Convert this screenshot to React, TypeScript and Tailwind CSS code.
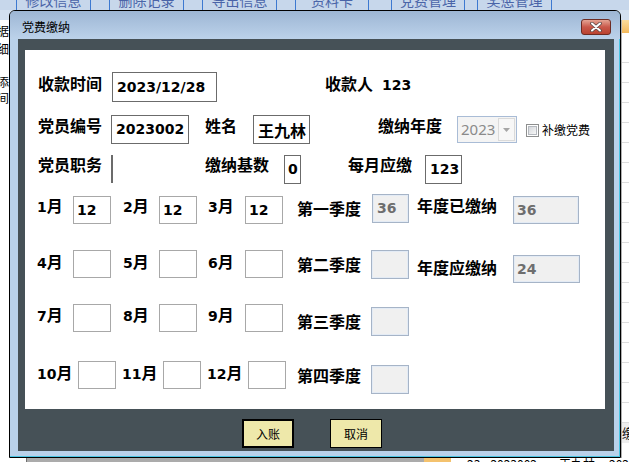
import type { ReactNode } from 'react';

const LABEL = 'whitespace-nowrap text-[16px] leading-[16px] font-bold text-black';
const NUM = "font-['DejaVu_Sans',sans-serif] text-[14px] font-bold";

type Kind = 'dark' | 'light' | 'off';

function Box({ className, kind, children }: { className: string; kind: Kind; children?: ReactNode }) {
  const look =
    kind === 'dark'
      ? 'border-[#6b6b6b] bg-white text-black pl-[4px]'
      : kind === 'light'
        ? 'border-[#a8a8a8] bg-white text-black pl-[3px]'
        : 'border-[#a6b4c7] bg-[#f0f0f0] text-[#6e6e6e] pl-[3px] shadow-[inset_0_0_0_1px_#e3ebf5]';
  return <div className={`flex shrink-0 items-center border ${look} ${className}`}>{children}</div>;
}

function Month({ n, className }: { n: string; className: string }) {
  return (
    <span className={`${LABEL} ${className}`}>
      <span className={NUM}>{n}</span>月
    </span>
  );
}

function Num({ children }: { children: ReactNode }) {
  return <span className={NUM}>{children}</span>;
}

function CloseButton() {
  return (
    <div className="flex h-[16px] w-[30px] items-center justify-center rounded-[3px] border border-[#6e2b22] bg-linear-to-b from-[#e4a494] via-[#c9584a] to-[#b9422f]">
      <svg width="12" height="10" viewBox="0 0 12 10">
        <path d="M2 1.5 L10 8.5 M10 1.5 L2 8.5" stroke="#5a4a48" strokeWidth="3.6" strokeLinecap="round" />
        <path d="M2 1.5 L10 8.5 M10 1.5 L2 8.5" stroke="#ffffff" strokeWidth="2" strokeLinecap="round" />
      </svg>
    </div>
  );
}

function Tabs() {
  return (
    <div className="flex h-[10px] overflow-hidden bg-[#c7d7eb] text-[14px] leading-[14px] text-[#4a64a8]">
      <div className="ml-[16px] w-[75px] shrink-0 border-x border-[#3d79d0] text-center -mt-[7px]">修改信息</div>
      <div className="ml-[18px] w-[75px] shrink-0 border-x border-[#3d79d0] text-center -mt-[7px]">删除记录</div>
      <div className="ml-[18px] w-[75px] shrink-0 border-x border-[#3d79d0] text-center -mt-[7px]">导出信息</div>
      <div className="ml-[18px] w-[74px] shrink-0 border-x border-[#3d79d0] text-center -mt-[7px]">资料卡</div>
      <div className="ml-[22px] w-[74px] shrink-0 border-x border-[#3d79d0] text-center -mt-[7px]">党费管理</div>
      <div className="ml-[12px] w-[75px] shrink-0 border-x border-[#3d79d0] text-center -mt-[7px]">奖惩管理</div>
    </div>
  );
}

function Background() {
  return (
    <div className="flex h-full flex-col">
      <Tabs />
      <div className="h-[10px] bg-[#d3e0ef]" />
      <div className="flex flex-1">
        {/* left list, mostly hidden */}
        <div className="flex w-[9px] flex-col items-end overflow-hidden text-[12px] leading-[12px] text-black">
          <span className="mt-[5px] whitespace-nowrap">数据</span>
          <span className="mt-[6px] whitespace-nowrap">明细</span>
          <span className="mt-[21px] whitespace-nowrap">添</span>
          <span className="mt-[4px] whitespace-nowrap">时间</span>
        </div>
        <div className="flex-1" />
        {/* right table, mostly hidden */}
        <div className="flex w-[8px] flex-col border-l border-[#b0b0b0]">
          <div className="h-[13px] bg-linear-to-b from-[#fbdc9c] to-[#f3b95a]" />
          <div className="h-[30px] border-b border-[#dcdcdc]" />
          {Array.from({ length: 18 }).map((_, i) => (
            <div key={i} className="h-[20px] border-b border-[#dcdcdc]" />
          ))}
          <div className="h-[20px] overflow-hidden bg-[#eeeeee] text-[13px] leading-[20px]">缴</div>
        </div>
      </div>
      <div className="flex h-[4px] overflow-hidden text-[12px] leading-[12px]">
        <div className="w-[27px]" />
        <div className="w-[407px] border-l border-[#707070] bg-[#ababab]" />
        <div className="w-[28px] bg-[#f4c26e]" />
        <div className="flex gap-[10px] pl-[16px] whitespace-nowrap text-black">
          <span>23</span>
          <span>2023002</span>
          <span className="ml-[12px]">王九林</span>
          <span className="ml-[4px]">202</span>
        </div>
      </div>
    </div>
  );
}

function Panel() {
  return (
    <div className="flex h-[359px] flex-col bg-white">
      {/* 收款时间 */}
      <div className="mt-[22px] flex h-[30px] items-start pl-[13px]">
        <span className={`${LABEL} mt-[3px] w-[74px]`}>收款时间</span>
        <Box kind="dark" className="h-[30px] w-[105px]">
          <Num>2023/12/28</Num>
        </Box>
        <span className={`${LABEL} ml-[108px] mt-[3px]`}>
          收款人<span className={`${NUM} ml-[9px]`}>123</span>
        </span>
      </div>

      {/* 党员编号 */}
      <div className="mt-[13px] flex h-[29px] items-start pl-[13px]">
        <span className={`${LABEL} mt-[2px] w-[73px]`}>党员编号</span>
        <Box kind="dark" className="h-[29px] w-[78px]">
          <Num>2023002</Num>
        </Box>
        <span className={`${LABEL} ml-[16px] mt-[2px] w-[32px]`}>姓名</span>
        <Box kind="dark" className="ml-[16px] h-[29px] w-[57px]">
          <span className={LABEL}>王九林</span>
        </Box>
        <span className={`${LABEL} ml-[68px] mt-[2px] w-[64px]`}>缴纳年度</span>
        <div className="ml-[15px] mt-[1px] flex h-[27px] w-[60px] shrink-0 border border-[#a9bcd6] bg-[#f4f4f4]">
          <span className="flex flex-1 items-center pl-[3px] font-['Noto_Sans',sans-serif] text-[15px] text-[#8a8a8a]">
            2023
          </span>
          <span className="my-[1px] mr-[1px] flex w-[17px] items-center justify-center border border-[#dadada] bg-[#f7f7f7]">
            <svg width="7" height="4" viewBox="0 0 7 4">
              <path d="M0 0 H7 L3.5 4 Z" fill="#a5a5a5" />
            </svg>
          </span>
        </div>
        <div className="ml-[9px] mt-[9px] flex h-[13px] w-[13px] shrink-0 items-center justify-center border border-[#8e8f8f] bg-white">
          <div className="h-[9px] w-[9px] border border-[#b5b9bf] bg-linear-to-br from-[#d5d8dc] to-[#f7f7f7]" />
        </div>
        <span className="ml-[3px] mt-[8px] whitespace-nowrap text-[12px] leading-[14px] text-black">补缴党费</span>
      </div>

      {/* 党员职务 */}
      <div className="mt-[11px] flex h-[29px] items-start pl-[13px]">
        <span className={`${LABEL} mt-[1px] w-[73px]`}>党员职务</span>
        <div className="h-[28px] w-[2px] shrink-0 bg-[#6b6b6b]" />
        <span className={`${LABEL} ml-[92px] mt-[1px] w-[64px]`}>缴纳基数</span>
        <Box kind="dark" className="ml-[15px] h-[29px] w-[17px] !pl-[3px]">
          <Num>0</Num>
        </Box>
        <span className={`${LABEL} ml-[47px] mt-[1px] w-[64px]`}>每月应缴</span>
        <Box kind="dark" className="ml-[13px] h-[29px] w-[37px]">
          <Num>123</Num>
        </Box>
      </div>

      {/* 1-3月 */}
      <div className="mt-[10px] flex h-[30px] items-start pl-[12px]">
        <Month n="1" className="mt-[3px] w-[36px]" />
        <Box kind="light" className="mt-[2px] h-[28px] w-[38px]">
          <Num>12</Num>
        </Box>
        <Month n="2" className="ml-[12px] mt-[3px] w-[36px]" />
        <Box kind="light" className="mt-[2px] h-[28px] w-[38px]">
          <Num>12</Num>
        </Box>
        <Month n="3" className="ml-[11px] mt-[3px] w-[37px]" />
        <Box kind="light" className="mt-[2px] h-[28px] w-[38px]">
          <Num>12</Num>
        </Box>
        <span className={`${LABEL} ml-[14px] mt-[6px] w-[64px]`}>第一季度</span>
        <Box kind="off" className="ml-[11px] h-[29px] w-[37px] !pl-[4px]">
          <Num>36</Num>
        </Box>
        <span className={`${LABEL} ml-[8px] mt-[3px] w-[80px]`}>年度已缴纳</span>
        <Box kind="off" className="ml-[16px] mt-[2px] h-[28px] w-[66px]">
          <Num>36</Num>
        </Box>
      </div>

      {/* 4-6月 */}
      <div className="mt-[26px] flex h-[33px] items-start pl-[12px]">
        <Month n="4" className="mt-[3px] w-[36px]" />
        <Box kind="light" className="h-[28px] w-[38px]" />
        <Month n="5" className="ml-[12px] mt-[3px] w-[36px]" />
        <Box kind="light" className="h-[28px] w-[38px]" />
        <Month n="6" className="ml-[11px] mt-[3px] w-[37px]" />
        <Box kind="light" className="h-[28px] w-[38px]" />
        <span className={`${LABEL} ml-[14px] mt-[6px] w-[64px]`}>第二季度</span>
        <Box kind="off" className="ml-[10px] h-[29px] w-[38px]" />
        <span className={`${LABEL} ml-[8px] mt-[9px] w-[80px]`}>年度应缴纳</span>
        <Box kind="off" className="ml-[16px] mt-[5px] h-[28px] w-[67px]">
          <Num>24</Num>
        </Box>
      </div>

      {/* 7-9月 */}
      <div className="mt-[21px] flex h-[32px] items-start pl-[12px]">
        <Month n="7" className="mt-[2px] w-[36px]" />
        <Box kind="light" className="h-[28px] w-[38px]" />
        <Month n="8" className="ml-[12px] mt-[2px] w-[36px]" />
        <Box kind="light" className="h-[28px] w-[38px]" />
        <Month n="9" className="ml-[11px] mt-[2px] w-[37px]" />
        <Box kind="light" className="h-[28px] w-[38px]" />
        <span className={`${LABEL} ml-[14px] mt-[9px] w-[64px]`}>第三季度</span>
        <Box kind="off" className="ml-[10px] mt-[3px] h-[29px] w-[38px]" />
      </div>

      {/* 10-12月 */}
      <div className="mt-[25px] flex h-[32px] items-start pl-[12px]">
        <Month n="10" className="mt-[3px] w-[41px]" />
        <Box kind="light" className="h-[28px] w-[38px]" />
        <Month n="11" className="ml-[6px] mt-[3px] w-[41px]" />
        <Box kind="light" className="h-[28px] w-[38px]" />
        <Month n="12" className="ml-[6px] mt-[3px] w-[41px]" />
        <Box kind="light" className="h-[28px] w-[38px]" />
        <span className={`${LABEL} ml-[11px] mt-[6px] w-[64px]`}>第四季度</span>
        <Box kind="off" className="ml-[10px] mt-[4px] h-[29px] w-[38px]" />
      </div>
    </div>
  );
}

export default function App() {
  return (
    <div className="relative h-[462px] w-[629px] overflow-hidden bg-white font-['Noto_Sans_CJK_SC',sans-serif]">
      <Background />

      {/* 党费缴纳 dialog */}
      <div className="absolute left-[9px] top-[10px] flex h-[448px] w-[612px] flex-col rounded-t-[6px] border border-black bg-[#b9d1ea] shadow-[inset_-1px_-1px_0_#4ac4e2]">
        <div className="flex h-[28px] items-center justify-between rounded-t-[5px] bg-linear-to-b from-[#9db6d4] to-[#bcd2ea] pl-[12px] pr-[9px] pt-[4px]">
          <span className="text-[12px] leading-[14px] text-black">党费缴纳</span>
          <CloseButton />
        </div>
        <div className="mb-[6px] ml-[8px] mr-[6px] flex flex-1 flex-col bg-[#465157] pb-[3px] pl-[7px] pr-[9px] pt-[11px]">
          <Panel />
          <div className="mt-[10px] flex h-[29px] gap-[36px] pl-[217px]">
            <button
              type="button"
              className="h-[29px] w-[52px] border-2 border-black bg-[#eee8aa] text-[12px] text-black"
            >
              入账
            </button>
            <button
              type="button"
              className="h-[29px] w-[52px] border border-black bg-[#eee8aa] text-[12px] text-black"
            >
              取消
            </button>
          </div>
        </div>
      </div>
    </div>
  );
}
